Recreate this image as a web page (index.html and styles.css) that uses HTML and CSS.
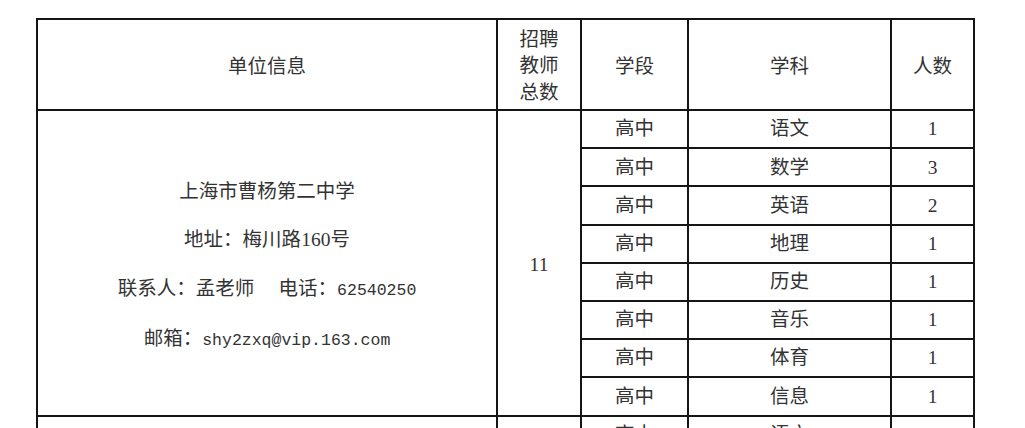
FILE: index.html
```html
<!DOCTYPE html>
<html lang="zh-CN">
<head>
<meta charset="utf-8">
<title>招聘信息</title>
<link rel="stylesheet" href="styles.css">
</head>
<body>
<table class="recruit">
  <colgroup>
    <col class="c-unit">
    <col class="c-total">
    <col class="c-stage">
    <col class="c-subject">
    <col class="c-count">
  </colgroup>
  <thead>
    <tr class="head-row">
      <th>单位信息</th>
      <th class="stack">招聘<br>教师<br>总数</th>
      <th>学段</th>
      <th>学科</th>
      <th>人数</th>
    </tr>
  </thead>
  <tbody>
    <tr>
      <td rowspan="8" class="unit">
        <div class="unit-line">上海市曹杨第二中学</div>
        <div class="unit-line">地址：梅川路<span class="latin">160</span>号</div>
        <div class="unit-line">联系人：孟老师　 电话：<span class="mono">62540250</span></div>
        <div class="unit-line">邮箱：<span class="mono">shy2zxq@vip.163.com</span></div>
      </td>
      <td rowspan="8" class="num total">11</td>
      <td>高中</td><td>语文</td><td class="num">1</td>
    </tr>
    <tr><td>高中</td><td>数学</td><td class="num">3</td></tr>
    <tr><td>高中</td><td>英语</td><td class="num">2</td></tr>
    <tr><td>高中</td><td>地理</td><td class="num">1</td></tr>
    <tr><td>高中</td><td>历史</td><td class="num">1</td></tr>
    <tr><td>高中</td><td>音乐</td><td class="num">1</td></tr>
    <tr><td>高中</td><td>体育</td><td class="num">1</td></tr>
    <tr><td>高中</td><td>信息</td><td class="num">1</td></tr>
    <tr>
      <td rowspan="2"></td>
      <td rowspan="2"></td>
      <td>高中</td><td>语文</td><td class="num">1</td>
    </tr>
    <tr><td>高中</td><td>数学</td><td class="num">1</td></tr>
  </tbody>
</table>
</body>
</html>
```

FILE: styles.css
```css
html, body {
  margin: 0;
  padding: 0;
  background: #ffffff;
  overflow: hidden;
}

body {
  font-family: "Liberation Serif", "Noto Sans CJK SC", serif;
  color: #333333;
  font-size: 19.5px;
}

.recruit {
  border-collapse: collapse;
  table-layout: fixed;
  width: 937px;
  margin: 18px 0 0 36px;
}

.c-unit { width: 460px; }
.c-total { width: 84px; }
.c-stage { width: 107px; }
.c-subject { width: 203px; }
.c-count { width: 83px; }

.recruit th,
.recruit td {
  border: 2px solid #151515;
  padding: 0;
  text-align: center;
  vertical-align: middle;
  font-weight: 400;
  line-height: 1;
}

.head-row th {
  height: 85px;
  padding-top: 4px;
}

.recruit th.stack {
  line-height: 26.5px;
}

.recruit tbody td {
  height: 36.2px;
}

.recruit td.unit {
  padding-top: 8px;
}

.recruit td.total {
  padding-top: 4px;
}

.unit-line {
  line-height: 48.6px;
  white-space: nowrap;
}

.mono {
  font-family: "Liberation Mono", monospace;
  font-size: 16.5px;
}

.latin {
  font-family: "Liberation Serif", serif;
}

.num {
  font-family: "Liberation Serif", serif;
}
```
